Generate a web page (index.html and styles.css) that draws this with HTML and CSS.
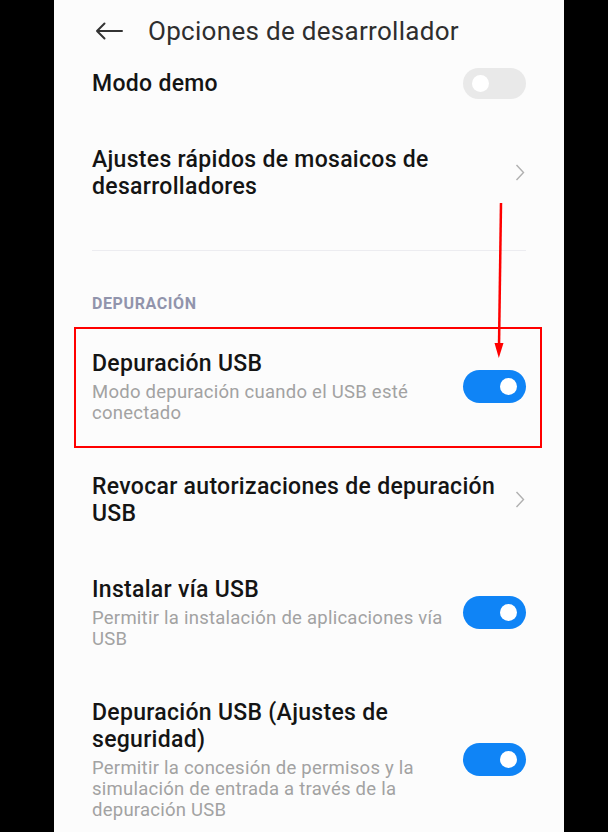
FILE: index.html
```html
<!DOCTYPE html>
<html lang="es">
<head>
<meta charset="utf-8">
<title>Opciones de desarrollador</title>
<link rel="stylesheet" href="styles.css">
</head>
<body>
<div class="screen">
  <header class="topbar">
    <svg class="back" width="28" height="18" viewBox="0 0 28 18" aria-hidden="true">
      <path d="M27 9H2M9.5 1.5L2 9l7.5 7.5" fill="none" stroke="#333" stroke-width="2" stroke-linecap="round" stroke-linejoin="round"/>
    </svg>
    <h1 class="title">Opciones de desarrollador</h1>
  </header>

  <div class="row">
    <div class="text"><div class="label">Modo demo</div></div>
    <span class="toggle off"><span class="knob"></span></span>
  </div>

  <div class="row nav">
    <div class="text"><div class="label">Ajustes rápidos de mosaicos de desarrolladores</div></div>
    <svg class="chev" width="10" height="17" viewBox="0 0 10 17" aria-hidden="true"><path d="M1.5 1l7 7.5-7 7.5" fill="none" stroke="#b0b0b0" stroke-width="1.4"/></svg>
  </div>

  <div class="divider"></div>

  <div class="section">DEPURACIÓN</div>

  <div class="row highlight">
    <div class="text">
      <div class="label">Depuración USB</div>
      <div class="sub">Modo depuración cuando el USB esté conectado</div>
    </div>
    <span class="toggle on"><span class="knob"></span></span>
  </div>

  <div class="row nav">
    <div class="text"><div class="label">Revocar autorizaciones de depuración USB</div></div>
    <svg class="chev" width="10" height="17" viewBox="0 0 10 17" aria-hidden="true"><path d="M1.5 1l7 7.5-7 7.5" fill="none" stroke="#b0b0b0" stroke-width="1.4"/></svg>
  </div>

  <div class="row">
    <div class="text">
      <div class="label">Instalar vía USB</div>
      <div class="sub">Permitir la instalación de aplicaciones vía USB</div>
    </div>
    <span class="toggle on"><span class="knob"></span></span>
  </div>

  <div class="row">
    <div class="text">
      <div class="label">Depuración USB (Ajustes de seguridad)</div>
      <div class="sub">Permitir la concesión de permisos y la simulación de entrada a través de la depuración USB</div>
    </div>
    <span class="toggle on"><span class="knob"></span></span>
  </div>

  <svg class="annot-arrow" width="16" height="160" viewBox="0 0 16 160" aria-hidden="true">
    <path d="M9 0L7 144" stroke="#ff0000" stroke-width="2.5" fill="none"/>
    <path d="M2.5 140L11.5 140L6.8 155Z" fill="#ff0000"/>
  </svg>
</div>
</body>
</html>
```

FILE: styles.css
```css
* { box-sizing: border-box; }
html, body { margin: 0; padding: 0; }
body {
  background: #000;
  font-family: Roboto, "Noto Sans", "Liberation Sans", sans-serif;
}
.screen {
  position: relative;
  width: 510px;
  height: 832px;
  margin-left: 54px;
  background: #fcfcfc;
  overflow: hidden;
  padding: 0 38px;
}
.topbar {
  display: flex;
  align-items: center;
  padding-top: 17px;
  height: 45px;
}
.back { margin-left: 3px; margin-right: 25px; flex: none; }
.title {
  margin: 0;
  font-size: 26px;
  line-height: 28px;
  font-weight: 400;
  letter-spacing: 0.3px;
  color: #2e2e2e;
  white-space: nowrap;
}
.row {
  position: relative;
  display: flex;
  align-items: center;
  justify-content: space-between;
  padding: 24.5px 0;
}
.text { flex: 1; padding-right: 14px; }
.nav .text { padding-right: 6px; }
.label {
  font-size: 23px;
  line-height: 27px;
  font-weight: 500;
  letter-spacing: 0.3px;
  color: #141414;
}
.sub {
  margin-top: 5px;
  font-size: 18.5px;
  line-height: 21px;
  letter-spacing: 0.25px;
  color: #a2a2a2;
}
.chev { flex: none; margin-right: 1px; }
.toggle {
  flex: none;
  position: relative;
  width: 63px;
  height: 33px;
  margin: -3px 0;
  border-radius: 17px;
}
.toggle.on { background: #0f84f6; }
.toggle.off { background: #e9e9e9; height: 31px; }
.knob {
  position: absolute;
  top: 50%;
  width: 17px;
  height: 17px;
  margin-top: -8.5px;
  border-radius: 50%;
  background: #fff;
}
.toggle.on .knob { right: 9px; }
.toggle.off .knob { left: 9px; }
.divider {
  margin-top: 26px;
  height: 1px;
  background: #ececf0;
}
.section {
  margin-top: 43px;
  margin-bottom: 11px;
  font-size: 16px;
  line-height: 20px;
  font-weight: 700;
  letter-spacing: 0.6px;
  color: #9194ac;
}
.highlight::after {
  content: "";
  position: absolute;
  top: 2px;
  bottom: 0;
  left: -18px;
  right: -16px;
  border: 2.5px solid #ff0000;
}
.annot-arrow {
  position: absolute;
  left: 438px;
  top: 203px;
}
```
